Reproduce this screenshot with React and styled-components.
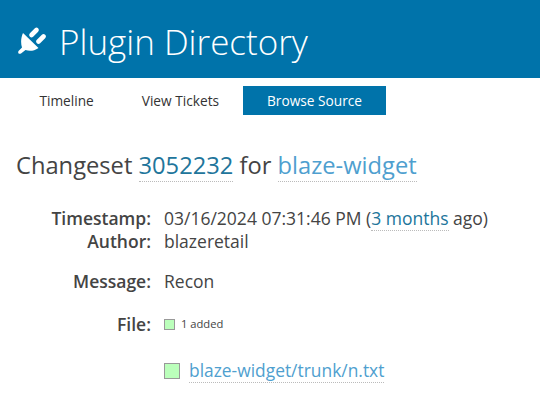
import React from 'react';
import styled, { createGlobalStyle } from 'styled-components';

const GlobalStyle = createGlobalStyle`
    html, body {
        margin: 0;
        padding: 0;
        background: #fff;
    }
    body {
        font-family: "Open Sans", sans-serif;
        color: #444;
        overflow: hidden;
    }
`;

const Page = styled.div`
    width: 540px;
    height: 412px;
    overflow: hidden;
`;

const Header = styled.header`
    height: 78px;
    background: #0073aa;
    display: flex;
    align-items: center;
    padding-left: 17px;
    gap: 13px;
`;

const SiteTitle = styled.h1`
    margin: 0;
    font-size: 35px;
    font-weight: 300;
    line-height: 78px;
    padding-top: 5px;
    color: #fff;
`;

const Nav = styled.nav`
    display: flex;
    margin-top: 8px;
    padding-left: 15.4px;
`;

const NavItem = styled.a`
    height: 29px;
    line-height: 29px;
    padding: 0 24px;
    font-size: 13.7px;
    color: ${({ $active }) => ($active ? '#fff' : '#333')};
    background: ${({ $active }) => ($active ? '#0073aa' : 'transparent')};
`;

const Content = styled.main`
    padding: 0 16px;
`;

const Title = styled.h2`
    margin: 35px 0 0;
    font-size: 23.7px;
    font-weight: 400;
    line-height: 30px;
    color: #444;
`;

const TitleLink = styled.a`
    color: ${({ $light }) => ($light ? '#4f9fcf' : '#21759b')};
    border-bottom: 1px dotted #bbb;
`;

const Details = styled.dl`
    display: grid;
    grid-template-columns: 135px 1fr;
    column-gap: 13px;
    margin: 27px 0 0;
    font-size: 17.5px;
    line-height: 23px;
`;

const Label = styled.dt`
    text-align: right;
    font-weight: 600;
    color: #444;
    margin-top: ${({ $gap }) => $gap || 0}px;
`;

const Value = styled.dd`
    margin: ${({ $gap }) => $gap || 0}px 0 0;
    color: #444;
    white-space: nowrap;
`;

const InlineLink = styled.a`
    color: #21759b;
    border-bottom: 1px dotted #bbb;
`;

const Legend = styled.div`
    display: flex;
    align-items: center;
    gap: 6px;
    height: 23px;
    font-size: 11.2px;
    color: #444;
`;

const LegendText = styled.span`
    line-height: 14px;
    margin-bottom: 2px;
`;

const Swatch = styled.span`
    display: block;
    box-sizing: border-box;
    width: ${({ $size }) => $size}px;
    height: ${({ $size }) => $size}px;
    background: #bfb;
    border: 1px solid #999;
`;

const FileRow = styled.div`
    display: flex;
    align-items: center;
    gap: 9px;
    margin: 23px 0 0 148px;
    font-size: 17.4px;
    line-height: 23px;
`;

const FileLink = styled.a`
    color: #4f9fcf;
    border-bottom: 1px dotted #bbb;
`;

const PluginIcon = () => (
    <svg width="29" height="29" viewBox="0 0 29 29" aria-hidden="true">
        <path fill="#fff" d="M6 8 L21.5 23 C17 26 12.5 26.5 8.5 25 L4 28.5 C2 29.5 0.5 28 1.5 26 L5 22.5 C3.5 18 4 12.5 6 8 Z" />
        <g stroke="#fff" strokeWidth="4.6" strokeLinecap="round">
            <line x1="14.5" y1="10" x2="19.5" y2="5" />
            <line x1="21.5" y1="16.5" x2="26.5" y2="11.5" />
        </g>
    </svg>
);

const App = () => (
    <Page>
        <GlobalStyle />
        <Header>
            <PluginIcon />
            <SiteTitle>Plugin Directory</SiteTitle>
        </Header>
        <Nav>
            <NavItem>Timeline</NavItem>
            <NavItem>View Tickets</NavItem>
            <NavItem $active>Browse Source</NavItem>
        </Nav>
        <Content>
            <Title>
                Changeset <TitleLink>3052232</TitleLink> for <TitleLink $light>blaze-widget</TitleLink>
            </Title>
            <Details>
                <Label>Timestamp:</Label>
                <Value>
                    03/16/2024 07:31:46 PM (<InlineLink>3 months</InlineLink> ago)
                </Value>
                <Label>Author:</Label>
                <Value>blazeretail</Value>
                <Label $gap={17}>Message:</Label>
                <Value $gap={17}>Recon</Value>
                <Label $gap={20}>File:</Label>
                <Value $gap={20}>
                    <Legend>
                        <Swatch $size={11} />
                        <LegendText>1 added</LegendText>
                    </Legend>
                </Value>
            </Details>
            <FileRow>
                <Swatch $size={16} />
                <FileLink>blaze-widget/trunk/n.txt</FileLink>
            </FileRow>
        </Content>
    </Page>
);

export default App;
